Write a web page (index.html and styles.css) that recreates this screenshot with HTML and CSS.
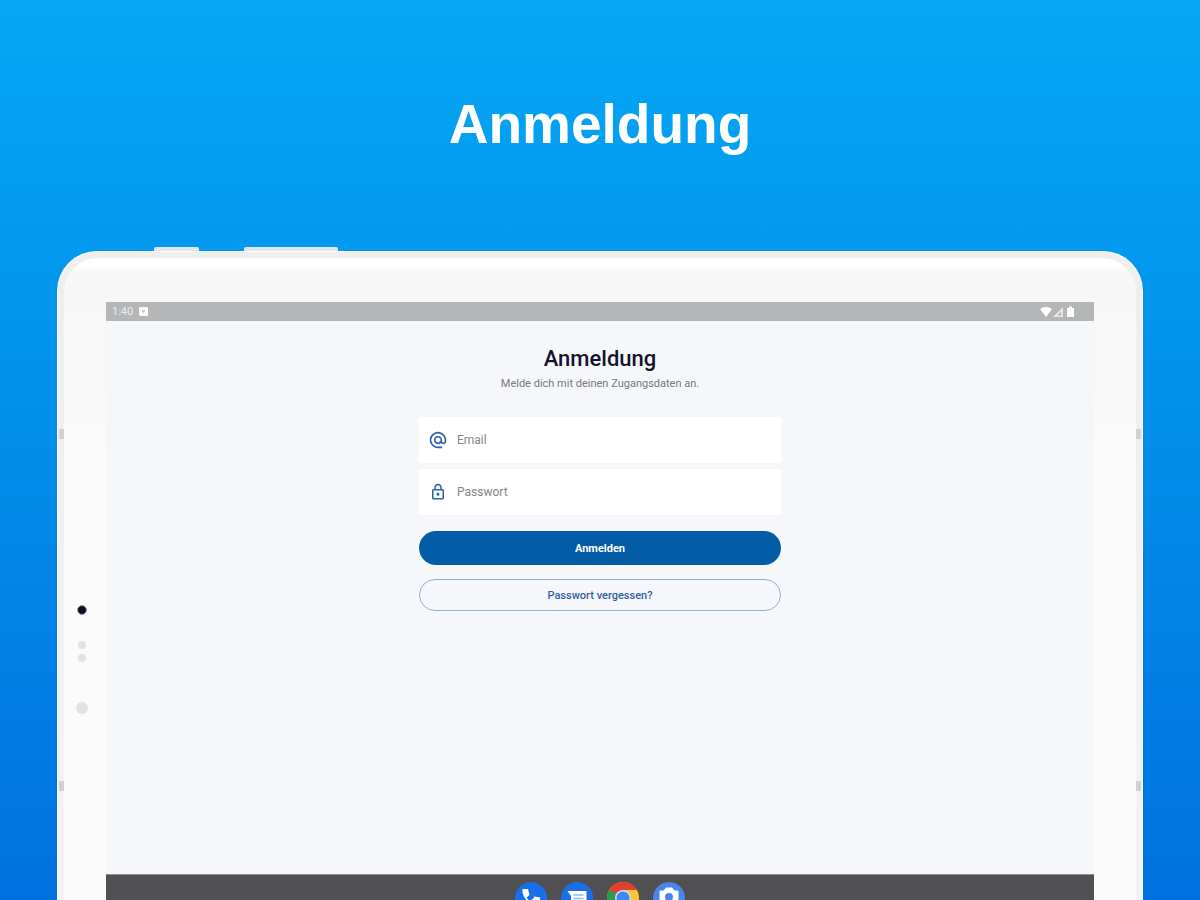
FILE: index.html
```html
<!DOCTYPE html>
<html lang="de">
<head>
    <meta charset="UTF-8">
    <meta name="viewport" content="width=device-width, initial-scale=1.0">
    <title>Anmeldung</title>
    <link rel="stylesheet" href="styles.css">
</head>
<body>
    <header class="headline">
        <h1>Anmeldung</h1>
    </header>

    <div class="tablet">
        <span class="side-button power"></span>
        <span class="side-button volume"></span>
        <span class="seam left upper"></span>
        <span class="seam left lower"></span>
        <span class="seam right upper"></span>
        <span class="seam right lower"></span>

        <div class="bezel">
            <div class="sensors">
                <span class="camera"></span>
                <span class="sensor"></span>
                <span class="sensor"></span>
                <span class="speaker"></span>
            </div>

            <div class="screen">
                <div class="status-bar">
                    <span class="clock">1:40</span>
                    <svg class="notification" width="9" height="9" viewBox="0 0 9 9">
                        <rect width="9" height="9" rx="1" fill="#fff"/>
                        <path d="M2.500 3.500h4L4.500 6z" fill="#b5b6b8"/>
                    </svg>
                    <svg class="signals" width="36" height="12" viewBox="0 0 36 12">
                        <path d="M0 3Q6 -1 12 3L6 11z" fill="#fff"/>
                        <path d="M13 11L23 1V11z" fill="#e6e7e8"/>
                        <path d="M17.500 9.500L21 5.500V9.500z" fill="#b5b6b8"/>
                        <path d="M27 2h2V0.500h3V2h2v9h-7z" fill="#fff"/>
                    </svg>
                </div>

                <main class="login">
                    <h2>Anmeldung</h2>
                    <p>Melde dich mit deinen Zugangsdaten an.</p>

                    <form id="login-form">
                        <div class="form-group">
                            <label for="email" aria-label="Email">
                                <svg width="18" height="18" viewBox="0 0 24 24" fill="#2b62a8">
                                    <path d="M12 1c-6 0-11 4.900-11 11s5 11 11 11h5.500v-2.200H12c-4.800 0-8.800-4-8.800-8.800S7.200 3.200 12 3.200s8.800 4 8.800 8.800v1.600c0 .9-.8 1.700-1.700 1.700s-1.600-.8-1.600-1.700V12c0-3-2.500-5.500-5.500-5.500S6.500 9 6.500 12s2.500 5.500 5.500 5.500c1.500 0 2.900-.6 3.900-1.600.7 1 1.900 1.600 3.200 1.600 2.200 0 3.900-1.700 3.900-3.900V12c0-6.100-5-11-11-11zm0 14.300c-1.800 0-3.300-1.500-3.300-3.300s1.500-3.300 3.300-3.300 3.300 1.500 3.300 3.300-1.500 3.300-3.300 3.300z"/>
                                </svg>
                            </label>
                            <input type="email" id="email" placeholder="Email">
                        </div>
                        <div class="form-group">
                            <label for="password" aria-label="Passwort">
                                <svg width="18" height="18" viewBox="0 0 24 24" fill="#2b62a8">
                                    <path d="M18 8h-1V6c0-2.760-2.240-5-5-5S7 3.240 7 6v2H6c-1.100 0-2 .9-2 2v10c0 1.100.9 2 2 2h12c1.100 0 2-.9 2-2V10c0-1.100-.9-2-2-2zM9 6c0-1.660 1.340-3 3-3s3 1.340 3 3v2H9V6zm9 14H6V10h12v10zm-6-3c1.100 0 2-.9 2-2s-.9-2-2-2-2 .9-2 2 .9 2 2 2z"/>
                                </svg>
                            </label>
                            <input type="password" id="password" placeholder="Passwort">
                        </div>
                        <button type="submit" class="primary">Anmelden</button>
                        <button type="button" class="secondary">Passwort vergessen?</button>
                    </form>
                </main>

                <nav class="taskbar">
                    <!-- Phone -->
                    <svg width="32" height="32" viewBox="0 0 32 32">
                        <circle cx="16" cy="16" r="16" fill="#1a6fe8"/>
                        <path d="M7.500 7h5.500l1.500 6-3 2.500c1 1.500 2.500 3 4 4l3-3.500 6 1.500v5c-10 1-18-7-17-15.500z" fill="#fff"/>
                        <path d="M19 14.500l6 1v3h-6z" fill="#fff"/>
                    </svg>
                    <!-- Messages -->
                    <svg width="32" height="32" viewBox="0 0 32 32">
                        <circle cx="16" cy="16" r="16" fill="#1a6fe8"/>
                        <path d="M6.500 9h19v14H10V14z" fill="#fff"/>
                        <path d="M12.500 13h10M12.500 16.500h10" stroke="#8db8f5" stroke-width="1.500"/>
                    </svg>
                    <!-- Browser -->
                    <svg width="32" height="32" viewBox="0 0 32 32">
                        <circle cx="16" cy="16" r="16" fill="#fbc62f"/>
                        <path d="M16 16L2.140 8A16 16 0 0 0 16 32L23 20z" fill="#2a9d4d"/>
                        <path d="M16 16L2.140 8A16 16 0 0 1 29.860 8H16z" fill="#e0402f"/>
                        <path d="M2.140 8L9 20l7-4z" fill="#2a9d4d"/>
                        <circle cx="16" cy="16" r="8" fill="#c9dcf5"/>
                        <circle cx="16" cy="16" r="6.500" fill="#3f86f0"/>
                    </svg>
                    <!-- Camera -->
                    <svg width="32" height="32" viewBox="0 0 32 32">
                        <circle cx="16" cy="16" r="16" fill="#4c84e8"/>
                        <path d="M7 9h4l2-3h6l2 3h4v14H7z" fill="#fff" stroke="#fff" stroke-linejoin="round"/>
                        <circle cx="16" cy="15" r="4" fill="#4c84e8"/>
                    </svg>
                </nav>
            </div>
        </div>
    </div>
</body>
</html>
```
FILE: styles.css
```css
* {
    box-sizing: border-box;
}

body {
    font-family: Roboto, sans-serif;
    background: linear-gradient(#06a7f5, #0299ee 28%, #0071e0);
    margin: 0;
    display: flex;
    flex-direction: column;
    min-height: 100vh;
}

.headline {
    padding: 93px 20px 95px;
    text-align: center;
}

h1 {
    margin: 0;
    font-family: "Liberation Sans", Arial, sans-serif;
    font-size: 55px;
    line-height: 63px;
    color: white;
}

/* Device frame */
.tablet {
    position: relative;
    flex: 1;
    display: flex;
    margin: 0 57px;
    padding: 6px 6px 0;
    border: 1px solid white;
    border-bottom: none;
    border-radius: 40px 40px 0 0;
    background: linear-gradient(#efeff0, #f3f3f4);
}

.bezel {
    flex: 1;
    display: flex;
    padding: 44px 42px 0 0;
    border-radius: 34px 34px 0 0;
    background: linear-gradient(#fff, #fff 8px, #f7f7f7 14px, #fafafa 200px, #fbfbfb);
}

.side-button {
    position: absolute;
    top: -5px;
    height: 4px;
    border-radius: 2px 2px 0 0;
    background: #e3e5ea;
}

.power {
    left: 96px;
    width: 45px;
}

.volume {
    left: 186px;
    width: 94px;
}

.seam {
    position: absolute;
    width: 5px;
    height: 10px;
    background: #cfd1d2;
}

.seam.left {
    left: 1px;
}

.seam.right {
    right: 1px;
}

.seam.upper {
    top: 177px;
}

.seam.lower {
    top: 529px;
}

.sensors {
    width: 42px;
    padding: 303px 6px 0 0;
    display: flex;
    flex-direction: column;
    align-items: center;
}

.sensors span {
    border-radius: 50%;
    background: #e2e2e2;
}

.sensors .camera {
    width: 10px;
    height: 10px;
    margin-bottom: 26px;
    border: 1px solid #a5a5b0;
    background: #0d0d2b;
}

.sensor {
    width: 8px;
    height: 8px;
    margin-bottom: 5px;
}

.speaker {
    width: 12px;
    height: 12px;
    margin-top: 35px;
}

.screen {
    flex: 1;
    display: flex;
    flex-direction: column;
    background: #f5f7fb;
}

.status-bar {
    display: flex;
    align-items: center;
    height: 19px;
    padding: 0 18px 0 6px;
    background: #b5b6b8;
    color: #eee;
    font-size: 11px;
}

.notification {
    margin-left: 6px;
}

.signals {
    margin-left: auto;
}

/* Login */
.login {
    flex: 1;
    width: 100%;
    max-width: 362px;
    margin: 0 auto;
    padding-top: 24px;
    text-align: center;
}

h2 {
    margin: 0;
    font-size: 22px;
    line-height: 27px;
    font-weight: 500;
    color: #14142b;
}

.login p {
    margin: 4px 0 25px;
    font-size: 11px;
    line-height: 16px;
    color: #77797f;
}

.form-group {
    display: flex;
    align-items: center;
    height: 46px;
    margin-bottom: 6px;
    padding: 0 10px;
    background: white;
}

.form-group label {
    display: flex;
}

input {
    flex: 1;
    padding: 0 10px;
    border: none;
    outline: none;
    background: none;
    font-family: inherit;
    font-size: 12px;
}

input::placeholder {
    color: #858585;
}

button {
    display: block;
    width: 100%;
    border-radius: 18px;
    font-family: inherit;
    font-size: 11px;
    cursor: pointer;
}

.primary {
    height: 34px;
    margin: 16px 0 14px;
    border: none;
    background: #045ca6;
    color: white;
    font-weight: 700;
}

.secondary {
    height: 32px;
    border: 1px solid #8fb1d3;
    background: none;
    color: #2f62a0;
    font-weight: 500;
}

.taskbar {
    display: flex;
    justify-content: center;
    gap: 14px;
    height: 26px;
    padding-top: 7px;
    overflow: hidden;
    border-top: 1px solid #8a8b8d;
    background: #505052;
}

.taskbar svg {
    flex: none;
}
```
